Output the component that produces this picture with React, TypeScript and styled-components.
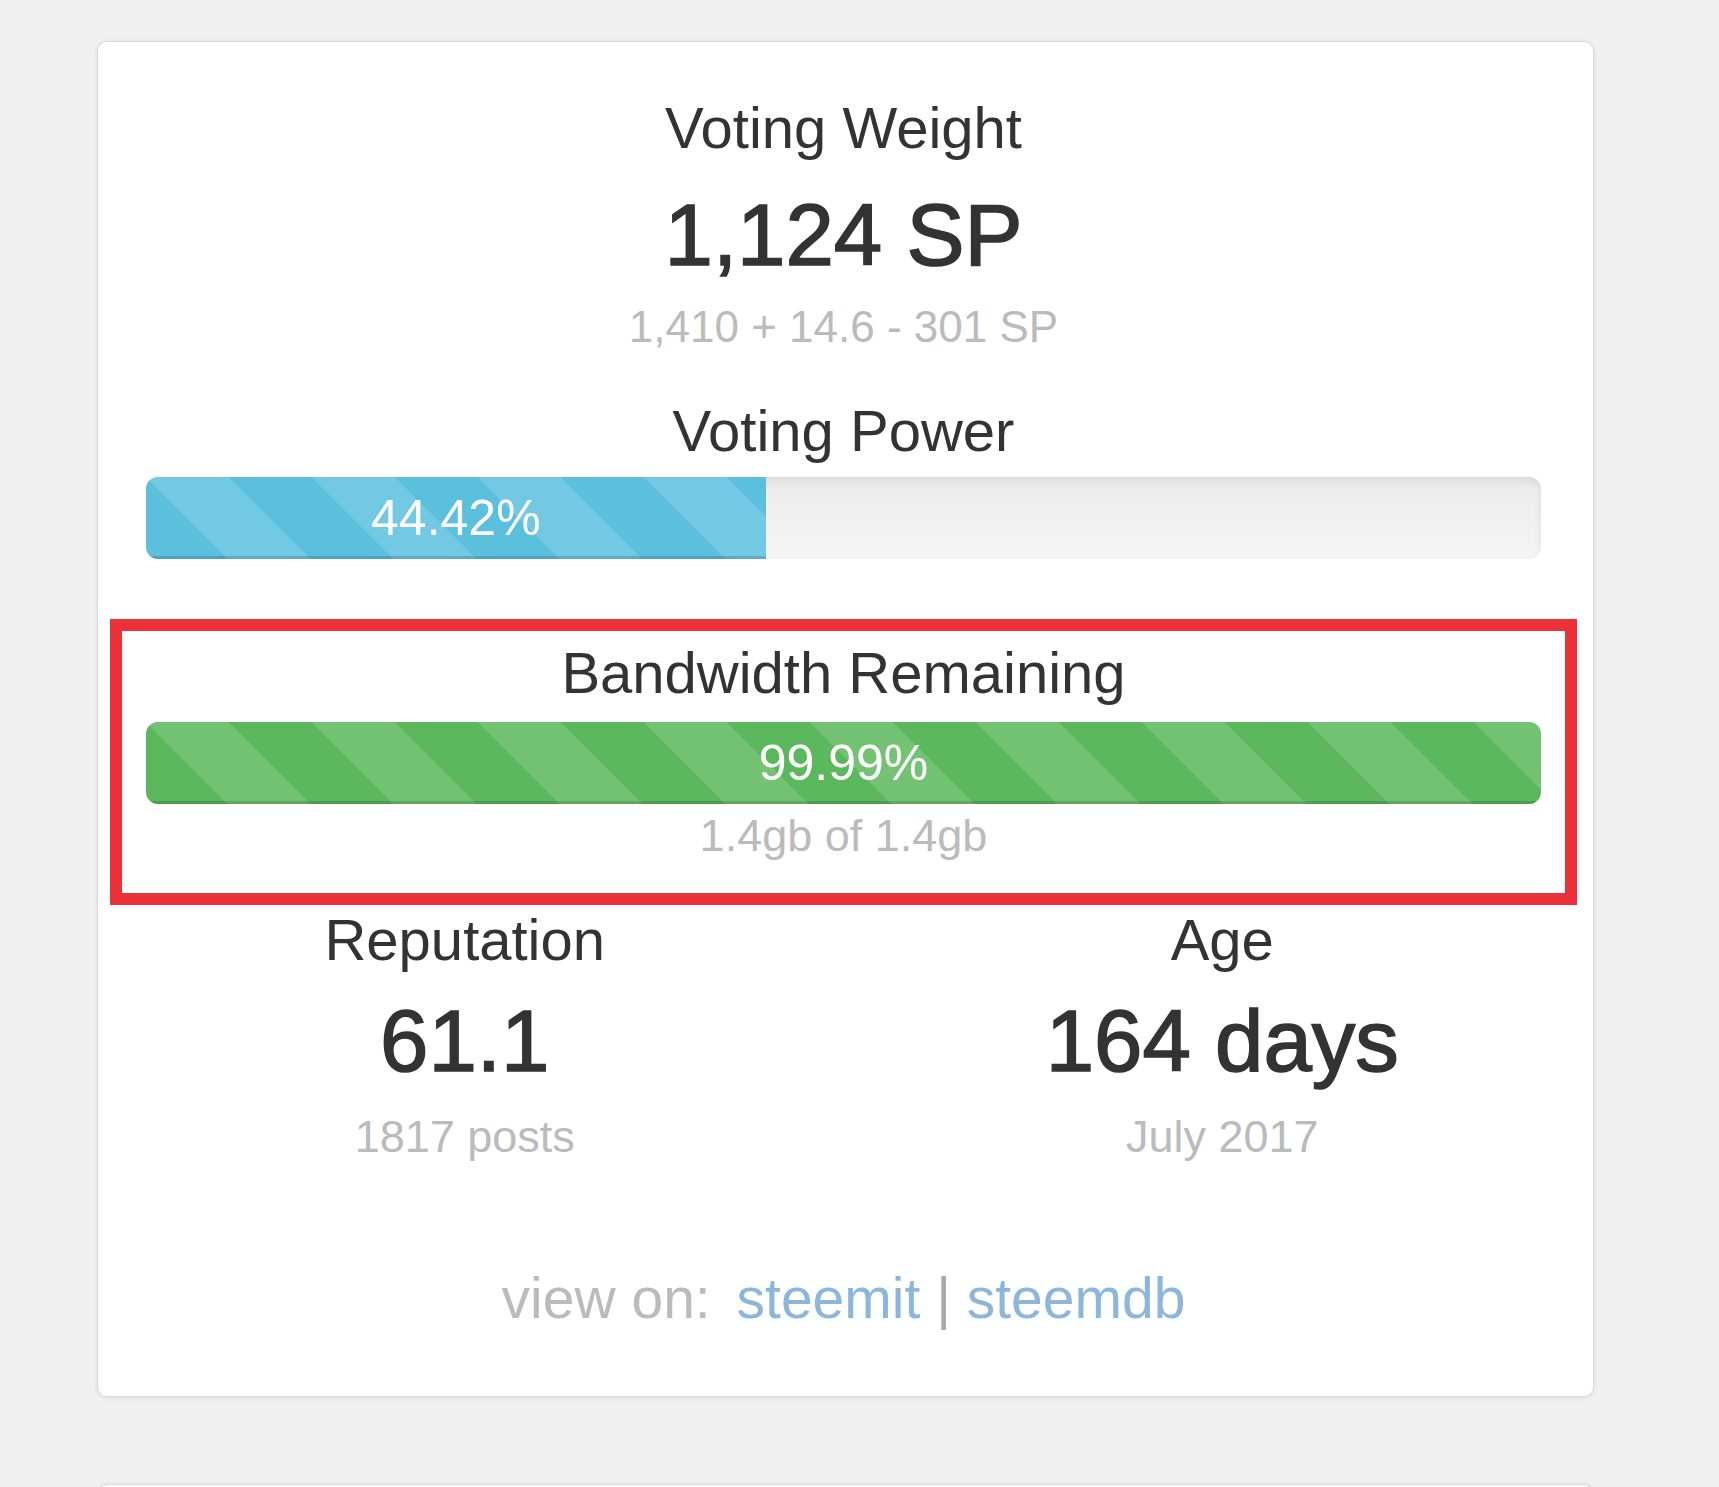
import React from 'react';
import styled, { createGlobalStyle } from 'styled-components';

const GlobalStyle = createGlobalStyle`
  html, body {
    margin: 0;
    padding: 0;
    height: 1487px;
    overflow: hidden;
    background: #f0f0f0;
  }
  body {
    font-family: "Liberation Sans", Arial, Helvetica, sans-serif;
    color: #333;
  }
`;

const Page = styled.div`
  display: flex;
  flex-direction: column;
  gap: 87px;
  padding: 41px 0 0 97px;
`;

const Card = styled.div`
  box-sizing: border-box;
  width: 1497px;
  background: #fff;
  border: 1px solid #dadada;
  border-radius: 10px;
  box-shadow: 0 1px 5px rgba(0, 0, 0, 0.08);
  padding: 51px 52px 64px 48px;
  text-align: center;
`;

const EmptyCard = styled(Card)`
  height: 240px;
  padding: 0;
`;

const Label = styled.div<{ $gap?: number }>`
  font-size: 58px;
  line-height: 1.2;
  color: #333;
  margin-top: ${(p) => p.$gap ?? 0}px;
`;

// regular face thickened a little: the reference sits between 400 and 700
const BigValue = styled.div<{ $gap?: number }>`
  font-size: 87px;
  font-weight: 400;
  -webkit-text-stroke: 1.6px #333;
  line-height: 1.2;
  color: #333;
  margin-top: ${(p) => p.$gap ?? 0}px;
`;

const SubText = styled.div<{ $gap?: number; $size?: number }>`
  font-size: ${(p) => p.$size ?? 45}px;
  line-height: 1.2;
  color: #bbb;
  margin-top: ${(p) => p.$gap ?? 0}px;
`;

const Track = styled.div<{ $gap?: number }>`
  height: 82px;
  margin-top: ${(p) => p.$gap ?? 0}px;
  border-radius: 12px;
  overflow: hidden;
  background: linear-gradient(to bottom, #ebebeb 0%, #f5f5f5 100%);
  box-shadow: inset 0 4px 8px rgba(0, 0, 0, 0.08);
  display: flex;
`;

const Fill = styled.div<{ $color: string }>`
  height: 100%;
  background-color: ${(p) => p.$color};
  background-image: linear-gradient(
    45deg,
    rgba(255, 255, 255, 0.15) 25%,
    transparent 25%,
    transparent 50%,
    rgba(255, 255, 255, 0.15) 50%,
    rgba(255, 255, 255, 0.15) 75%,
    transparent 75%,
    transparent
  );
  background-size: 166px 166px;
  box-shadow: inset 0 -3px 0 rgba(0, 0, 0, 0.15);
  color: #fff;
  font-size: 50px;
  line-height: 82px;
  text-align: center;
  white-space: nowrap;
`;

const Highlight = styled.div`
  margin: 60px -36px 0;
  border: 12px solid #ec3238;
  padding: 7px 24px 30px;
`;

const StatRow = styled.div`
  display: grid;
  grid-template-columns: 1fr 1fr;
  margin: 0 -60px;
`;

const StatCol = styled.div`
  text-align: center;
`;

const Footer = styled.div`
  margin-top: 100px;
  font-size: 57px;
  line-height: 1.2;
  color: #bbb;
`;

const Muted = styled.span<{ $space?: number }>`
  color: #bbb;
  margin-right: ${(p) => p.$space ?? 0}px;
`;

const Link = styled.a`
  color: #8db6dc;
  text-decoration: none;
`;

const Divider = styled.span`
  color: #aaa;
`;

const ProgressBar = ({
  value,
  color,
  gap,
}: {
  value: number;
  color: string;
  gap: number;
}) => (
  <Track $gap={gap}>
    <Fill $color={color} style={{ width: value + '%' }}>
      {value.toFixed(2)}%
    </Fill>
  </Track>
);

export default function App() {
  return (
    <>
      <GlobalStyle />
      <Page>
        <Card>
          <Label>Voting Weight</Label>
          <BigValue $gap={20}>1,124 SP</BigValue>
          <SubText $gap={14} $size={44}>
            1,410 + 14.6 - 301 SP
          </SubText>

          <Label $gap={42}>Voting Power</Label>
          <ProgressBar value={44.42} color="#5bc0de" gap={12} />

          <Highlight>
            <Label>Bandwidth Remaining</Label>
            <ProgressBar value={99.99} color="#5cb85c" gap={14} />
            <SubText $gap={5}>1.4gb of 1.4gb</SubText>
          </Highlight>

          <StatRow>
            <StatCol>
              <Label>Reputation</Label>
              <BigValue $gap={14}>61.1</BigValue>
              <SubText $gap={17}>1817 posts</SubText>
            </StatCol>
            <StatCol>
              <Label>Age</Label>
              <BigValue $gap={14}>164 days</BigValue>
              <SubText $gap={17}>July 2017</SubText>
            </StatCol>
          </StatRow>

          <Footer>
            <Muted $space={10}>view on: </Muted>
            <Link href="#">steemit</Link> <Divider>|</Divider>{' '}
            <Link href="#">steemdb</Link>
          </Footer>
        </Card>
        <EmptyCard />
      </Page>
    </>
  );
}
